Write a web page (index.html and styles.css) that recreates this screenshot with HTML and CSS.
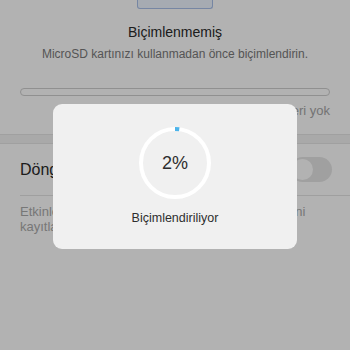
FILE: index.html
```html
<!DOCTYPE html>
<html lang="tr">
<head>
<meta charset="utf-8">
<link rel="stylesheet" href="styles.css">
</head>
<body>
<div class="page">
  <div class="card-top"></div>
  <h1 class="title">Biçimlenmemiş</h1>
  <p class="subtitle">MicroSD kartınızı kullanmadan önce biçimlendirin.</p>
  <div class="bar"></div>
  <p class="usage">Veri yok</p>
  <div class="band"></div>
  <div class="row">
    <span class="row-label">Döngüsel kayıt</span>
    <span class="toggle"><span class="knob"></span></span>
  </div>
  <p class="desc">Etkinleştirildiğinde, kart dolunca eski videolar yeni kayıtlarla değiştirilir.</p>
</div>
<div class="overlay"></div>
<div class="modal">
  <div class="ring">
    <svg width="72" height="72" viewBox="0 0 72 72">
      <circle cx="36" cy="36" r="34" fill="none" stroke="#ffffff" stroke-width="4"/>
      <circle cx="36" cy="36" r="34" fill="none" stroke="#4db4ea" stroke-width="4" stroke-dasharray="4.3 300" transform="rotate(-90 36 36)"/>
    </svg>
    <span class="pct">2%</span>
  </div>
  <div class="label">Biçimlendiriliyor</div>
</div>
</body>
</html>
```
FILE: styles.css
```css
html, body {
  margin: 0;
  padding: 0;
}
body {
  width: 350px;
  height: 350px;
  overflow: hidden;
  background: #ffffff;
  font-family: "Liberation Sans", Arial, sans-serif;
}
.page {
  display: flex;
  flex-direction: column;
}
.card-top {
  align-self: center;
  width: 74px;
  height: 8px;
  background: #eef5ff;
  border: 1px solid #a9c0ea;
  border-top: none;
  border-radius: 0 0 3px 3px;
}
.title {
  margin: 13px 0 0;
  font-size: 14px;
  font-weight: 400;
  line-height: 20px;
  text-align: center;
  color: #2a2a2a;
}
.subtitle {
  margin: 3px 0 0;
  font-size: 12px;
  line-height: 18px;
  text-align: center;
  color: #7a7a7a;
}
.bar {
  margin: 25px 20px 0;
  height: 6px;
  border: 1px solid #cfcfcf;
  border-radius: 4px;
}
.usage {
  margin: 6px 20px 0;
  font-size: 13px;
  line-height: 18px;
  text-align: right;
  color: #a6a6a6;
}
.band {
  margin-top: 14px;
  height: 8px;
  background: #f2f2f2;
  border-top: 1px solid #e6e6e6;
  border-bottom: 1px solid #e6e6e6;
}
.row {
  display: flex;
  align-items: center;
  justify-content: space-between;
  height: 51px;
  margin-left: 20px;
  padding-right: 18px;
  border-bottom: 1px solid #e4e4e4;
}
.row-label {
  font-size: 16px;
  color: #2a2a2a;
}
.toggle {
  display: flex;
  align-items: center;
  width: 42px;
  height: 25px;
  padding: 0 2px;
  box-sizing: border-box;
  border-radius: 13px;
  background: #e6e6e6;
}
.knob {
  width: 21px;
  height: 21px;
  border-radius: 50%;
  background: #ffffff;
}
.desc {
  margin: 8px 35px 0 20px;
  font-size: 13px;
  line-height: 15px;
  color: #ababab;
}
.overlay {
  position: fixed;
  inset: 0;
  background: rgba(0, 0, 0, 0.3);
}
.modal {
  position: fixed;
  left: 53px;
  top: 104px;
  width: 244px;
  height: 145px;
  border-radius: 9px;
  background: #f0f0f0;
  display: flex;
  flex-direction: column;
  align-items: center;
}
.ring {
  position: relative;
  width: 72px;
  height: 72px;
  margin-top: 23px;
}
.ring svg {
  display: block;
}
.pct {
  position: absolute;
  inset: 0;
  display: flex;
  align-items: center;
  justify-content: center;
  font-size: 18px;
  color: #2e2e2e;
}
.label {
  margin-top: 10px;
  font-size: 12.5px;
  line-height: 18px;
  color: #2e2e2e;
}
```
